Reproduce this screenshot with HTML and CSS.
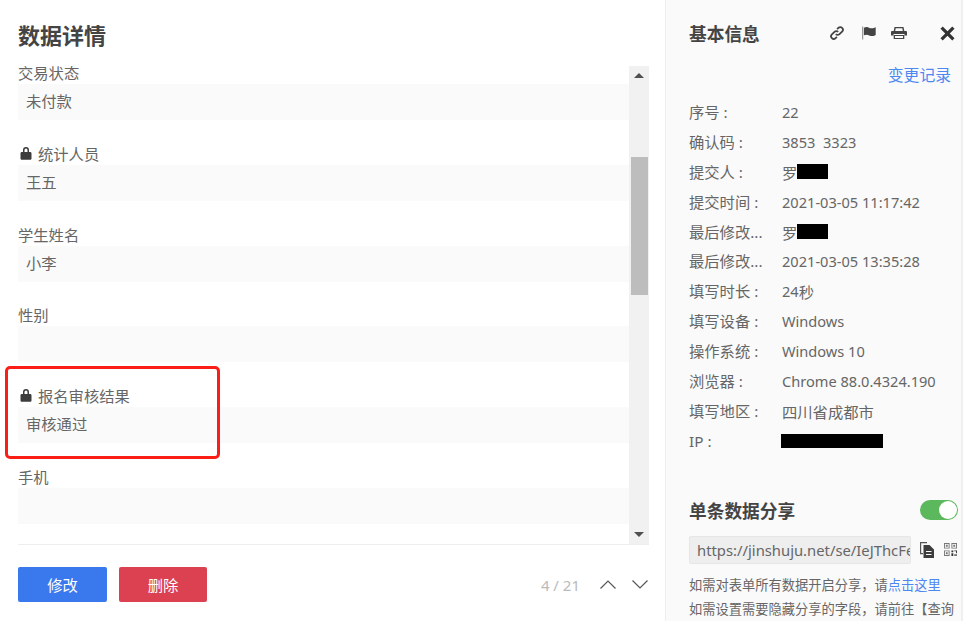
FILE: index.html
```html
<!DOCTYPE html>
<html lang="zh">
<head>
<meta charset="utf-8">
<title>数据详情</title>
<link rel="stylesheet" href="styles.css">
</head>
<body>
<div class="app">
  <main class="main">
    <h1 class="title">数据详情</h1>
    <div class="scroller">
      <div class="fields">
        <div class="field"><div class="label">交易状态</div><div class="value">未付款</div></div>
        <div class="field"><div class="label"><svg class="lock" viewBox="0 0 12 14"><path d="M3 6V4a3 3 0 0 1 6 0v2h1.2c.7 0 1.3.6 1.3 1.3v5.2c0 .7-.6 1.3-1.3 1.3H1.800c-.7 0-1.300-.6-1.300-1.300V7.300C.5 6.600 1.100 6 1.800 6H3zm1.500 0h3V4a1.500 1.500 0 0 0-3 0v2z"/></svg>统计人员</div><div class="value">王五</div></div>
        <div class="field"><div class="label">学生姓名</div><div class="value">小李</div></div>
        <div class="field"><div class="label">性别</div><div class="value"></div></div>
        <div class="field"><div class="label"><svg class="lock" viewBox="0 0 12 14"><path d="M3 6V4a3 3 0 0 1 6 0v2h1.2c.7 0 1.3.6 1.3 1.3v5.2c0 .7-.6 1.3-1.3 1.3H1.800c-.7 0-1.300-.6-1.300-1.300V7.300C.5 6.600 1.100 6 1.800 6H3zm1.500 0h3V4a1.500 1.500 0 0 0-3 0v2z"/></svg>报名审核结果</div><div class="value">审核通过</div></div>
        <div class="field"><div class="label">手机</div><div class="value"></div></div>
      </div>
      <div class="scrollbar">
        <div class="arrow-up"></div>
        <div class="thumb"></div>
        <div class="arrow-down"></div>
      </div>
    </div>
    <div class="footer">
      <button class="btn btn-blue">修改</button>
      <button class="btn btn-red">删除</button>
      <div class="pager">
        <span class="pager-count">4 / 21</span>
        <svg class="chev" viewBox="0 0 16 9"><path d="M.5 8.500L8 1l7.500 7.500"/></svg>
        <svg class="chev" viewBox="0 0 16 9"><path d="M.5.5L8 8l7.500-7.500"/></svg>
      </div>
    </div>
    <div class="highlight"></div>
  </main>
  <aside class="side">
    <div class="side-head">
      <h2 class="side-title">基本信息</h2>
      <svg class="ic ic-link" viewBox="0 0 16 16"><path d="M6.800 9.200a2.600 2.600 0 0 0 3.700 0l2.600-2.600a2.600 2.600 0 0 0-3.700-3.700L8.100 4.200M9.200 6.800a2.600 2.600 0 0 0-3.700 0L2.900 9.400a2.600 2.600 0 0 0 3.700 3.700l1.300-1.300"/></svg>
      <svg class="ic-flag" viewBox="0 0 16 14"><path fill="#999" d="M0 0h1.300v14H0z"/><path fill="#444" d="M2 1.500c2.200-1.200 4-1 5.500-.2s3.500.9 6.500-.3c.4-.1.600 0 .6.300v7.500c0 .3-.1.400-.4.500-2.500 1.200-4.700 1.200-6.400.3S4 8.600 2 9.500z"/></svg>
      <svg class="ic-print" viewBox="0 0 16 12"><path fill="#444" fill-rule="evenodd" d="M3.500 0h9l.8 4H15a1 1 0 0 1 1 1v3.500h-2.500V7h-11v1.500H0V5a1 1 0 0 1 1-1h1.700zM4.700 1.300L4.200 4h7.600l-.5-2.700zM2.700 8h10.600v4H2.700zM4 9v2h8V9z"/></svg>
      <svg class="ic-close" viewBox="0 0 14 14"><path d="M1.500 1.500l11 11M12.500 1.500l-11 11"/></svg>
    </div>
    <a class="history">变更记录</a>
    <dl class="info">
      <div class="row"><dt>序号 :</dt><dd>22</dd></div>
      <div class="row"><dt>确认码 :</dt><dd>3853&nbsp;&nbsp;3323</dd></div>
      <div class="row"><dt>提交人 :</dt><dd><span class="cjk">罗</span><span class="redact"></span></dd></div>
      <div class="row"><dt>提交时间 :</dt><dd>2021-03-05 11:17:42</dd></div>
      <div class="row"><dt>最后修改...</dt><dd><span class="cjk">罗</span><span class="redact"></span></dd></div>
      <div class="row"><dt>最后修改...</dt><dd>2021-03-05 13:35:28</dd></div>
      <div class="row"><dt>填写时长 :</dt><dd>24<span class="cjk">秒</span></dd></div>
      <div class="row"><dt>填写设备 :</dt><dd>Windows</dd></div>
      <div class="row"><dt>操作系统 :</dt><dd>Windows 10</dd></div>
      <div class="row"><dt>浏览器 :</dt><dd>Chrome 88.0.4324.190</dd></div>
      <div class="row"><dt>填写地区 :</dt><dd><span class="cjk">四川省成都市</span></dd></div>
      <div class="row"><dt>IP :</dt><dd><span class="redact-ip"></span></dd></div>
    </dl>
    <div class="share-head">
      <h2 class="side-title">单条数据分享</h2>
      <span class="toggle"><span class="knob"></span></span>
    </div>
    <div class="share-url">
      <div class="url">https://jinshuju.net/se/IeJThcFe</div>
      <svg class="ic-copy" viewBox="0 0 14 16"><path fill="#555" fill-rule="evenodd" d="M0 0h7v1.200H1.200V11H3v1.200H0z"/><path fill="#3c3c3c" fill-rule="evenodd" d="M3.500 3h6L14 7.500V16H3.500zM6 9v1h5.500V9zM6 12v1h5.500v-1z"/></svg>
      <svg class="ic-qr" viewBox="0 0 14 14"><path fill-rule="evenodd" d="M0 0h6v6H0zM1 1v4h4V1zM8 0h6v6H8zM9 1v4h4V1zM0 8h6v6H0zM1 9v4h4V9zM2 2h2v2H2zM10 2h2v2h-2zM2 10h2v2H2z"/><path fill="#333" d="M8 8h2v2H8zM11 8h3v3h-1V9h-2zM8 11h2v3H8z"/><path d="M11 12h3v2h-3z"/></svg>
    </div>
    <p class="help">如需对表单所有数据开启分享，请<a class="link">点击这里</a></p>
    <p class="help">如需设置需要隐藏分享的字段，请前往【查询</p>
  </aside>
</div>
</body>
</html>
```
FILE: styles.css
```css
* { box-sizing: border-box; }
html, body { margin: 0; height: 100%; overflow: hidden; background: #fff; }
body { font-family: "Noto Sans", "Noto Sans CJK SC", sans-serif; color: #666; }
.app { display: flex; height: 621px; width: 963px; overflow: hidden; }
.main { position: relative; width: 665px; flex: none; padding: 17px 16px 0 18px; overflow: hidden; }
.title { margin: 0; font: 700 22px/34px "Noto Sans CJK SC", sans-serif; color: #444; height: 49px; }
.scroller { display: flex; height: 479px; border-bottom: 1px solid #eee; }
.fields { flex: 1; min-width: 0; height: 478px; }
.field { height: 80.800px; }
.label { display: flex; align-items: flex-start; height: 18px; font: 15.300px/12px "Noto Sans CJK SC", sans-serif; color: #666; }
.value { height: 36px; padding-left: 8px; background: #fafafa; font: 15.300px/33px "Noto Sans CJK SC", sans-serif; color: #666; }
.lock { width: 12px; height: 14px; margin: -1px 6px 0 2px; fill: #3c3c3c; }
.scrollbar { position: relative; width: 20px; height: 478px; flex: none; background: #f1f1f1; display: flex; flex-direction: column; align-items: center; }
.arrow-up { margin-top: 7px; width: 0; border: 5px solid transparent; border-top: 0; border-bottom: 5px solid #505050; }
.thumb { position: absolute; top: 91px; left: 2px; width: 17px; height: 138px; background: #bdbdbd; }
.arrow-down { position: absolute; bottom: 7px; width: 0; border: 5px solid transparent; border-bottom: 0; border-top: 5px solid #505050; }
.footer { display: flex; align-items: center; margin-top: 22px; height: 35px; }
.btn { height: 35px; border: 0; border-radius: 2px; color: #fff; font: 15.300px/33px "Noto Sans CJK SC", sans-serif; padding: 0; }
.btn-blue { width: 89px; background: #3a78ee; }
.btn-red { width: 88px; margin-left: 12px; background: #dc4152; }
.pager { display: flex; align-items: center; margin-left: auto; margin-right: 1px; }
.pager-count { font: 15px/20px "Noto Sans", sans-serif; color: #bbb; margin-right: 20px; }
.chev { width: 16px; height: 9px; fill: none; stroke: #555; stroke-width: 1.200; margin-left: 16px; }
.pager-count + .chev { margin-left: 0; }
.highlight { position: absolute; left: 5px; top: 366px; width: 215px; height: 93px; border: 3px solid #fa1e16; border-radius: 5px; }
.side { flex: 1; background: #fafafa; border-left: 1px solid #eee; border-right: 2px solid #f0f0f0; padding: 0 0 0 23px; min-width: 0; font: 15.300px/30px "Noto Sans", "Noto Sans CJK SC", sans-serif; }
.side-head { display: flex; align-items: center; height: 30px; margin-top: 18px; }
.side-title { margin: 0; font: 700 17.700px/30px "Noto Sans CJK SC", sans-serif; color: #444; }
.ic { width: 16px; height: 16px; fill: none; stroke: #444; stroke-width: 1.800; }
.ic-link { margin-left: 69px; }
.ic-flag { width: 15px; height: 14px; margin-left: 17px; }
.ic-print { width: 16px; height: 12px; margin-left: 14px; }
.ic-close { width: 15px; height: 15px; margin-left: 33px; fill: none; stroke: #333; stroke-width: 3; }
.history { display: block; margin-top: 12px; height: 30px; text-align: right; padding-right: 10px; color: #4d88f1; font: 15.800px/30px "Noto Sans CJK SC", sans-serif; }
.info { margin: 7px 0 0; }
.row { display: flex; height: 29.900px; }
.row dt { width: 93px; flex: none; }
.row dd { margin: 0; display: flex; align-items: center; height: 30px; white-space: nowrap; font-size: 14.600px; }
.cjk { font: 15.300px/30px "Noto Sans CJK SC", sans-serif; }
.redact { display: inline-block; width: 31px; height: 15px; background: #000; }
.redact-ip { display: block; width: 102px; height: 14px; margin-left: -1px; background: #000; }
.share-head { display: flex; align-items: center; justify-content: space-between; margin-top: 39px; height: 30px; padding-right: 3px; }
.toggle { display: block; width: 38px; height: 20px; border-radius: 10px; background: #5cb85c; position: relative; }
.knob { position: absolute; right: 1px; top: 1px; width: 18px; height: 18px; border-radius: 50%; background: #fff; }
.share-url { display: flex; align-items: center; margin-top: 11px; height: 28px; }
.url { width: 222px; height: 28px; flex: none; background: #eee; border: 1px solid #e6e6e6; border-radius: 2px; padding: 0 6px 0 7px; overflow: hidden; white-space: nowrap; font-size: 14.800px; line-height: 27px; }
.ic-copy { width: 14px; height: 16px; margin-left: 9px; }
.ic-qr { width: 13px; height: 13px; margin-left: 10px; fill: #777; }
.help { margin: 0; font: 13.250px/24px "Noto Sans CJK SC", sans-serif; white-space: nowrap; color: #666; }
.share-url + .help { margin-top: 9px; }
.link { color: #4d88f1; }
```
